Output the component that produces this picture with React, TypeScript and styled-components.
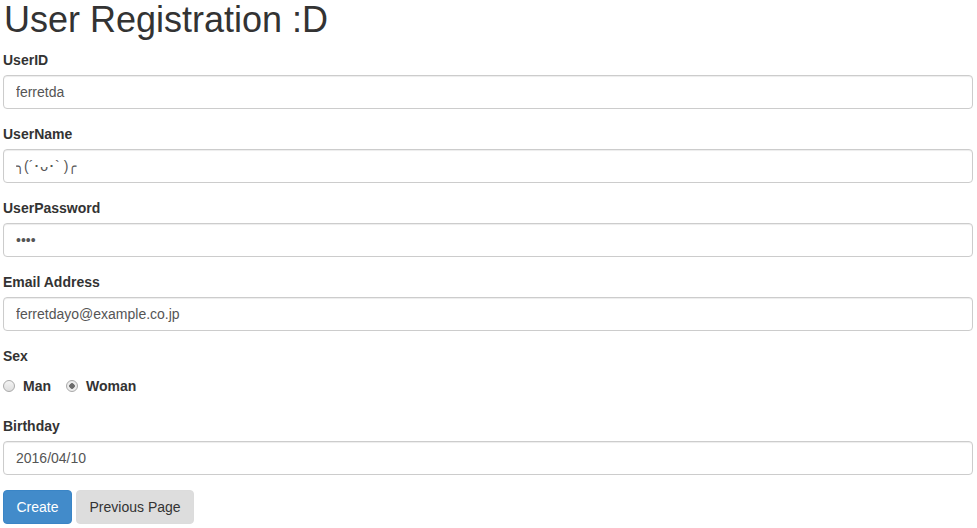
import React from "react";
import styled, { createGlobalStyle } from "styled-components";

const Global = createGlobalStyle`
  html, body { margin: 0; padding: 0; background: #fff; }
  body {
    font-family: "Liberation Sans", Arial, sans-serif;
    font-size: 14px;
    line-height: 1.42857143;
    color: #333;
  }
  * { box-sizing: border-box; }
`;

const Page = styled.div`
  padding: 0 4px 0 3px;
`;

const Title = styled.h1`
  margin: 0 0 10px 1px;
  font-size: 36px;
  font-weight: 500;
  line-height: 1.1;
  color: #333;
`;

const Group = styled.div`
  margin-bottom: 15px;
`;

const Label = styled.label`
  display: inline-block;
  margin-bottom: 5px;
  font-weight: bold;
  max-width: 100%;
`;

const Input = styled.input`
  display: block;
  width: 100%;
  height: 34px;
  padding: 6px 12px;
  font-family: "Liberation Sans", Arial, sans-serif;
  font-size: 14px;
  line-height: 1.42857143;
  color: #555;
  background: #fff;
  border: 1px solid #ccc;
  border-radius: 4px;
  box-shadow: inset 0 1px 1px rgba(0, 0, 0, 0.075);
  outline: none;
`;

const RadioRow = styled.div`
  display: flex;
  align-items: center;
  height: 30px;
  padding: 0;
`;

const RadioLabel = styled.label`
  display: inline-flex;
  align-items: center;
  font-weight: bold;
  line-height: 20px;
  margin-right: 15px;
`;

const RadioDot = styled.span<{ $checked?: boolean }>`
  display: inline-block;
  width: 12px;
  height: 12px;
  border-radius: 50%;
  border: 1px solid #a9a9a9;
  background: ${(p) =>
    p.$checked
      ? "radial-gradient(circle, #6b6b6b 0 2.5px, #ececec 3px)"
      : "linear-gradient(#f4f4f4, #dedede)"};
  margin-right: 8px;
`;

const Buttons = styled.div`
  display: flex;
  gap: 4px;
`;

const Button = styled.button<{ $primary?: boolean }>`
  height: 34px;
  padding: 6px 12.5px;
  font-family: "Liberation Sans", Arial, sans-serif;
  font-size: 14px;
  line-height: 1.42857143;
  border-radius: 4px;
  border: 1px solid ${(p) => (p.$primary ? "#3a85c6" : "#dcdcdc")};
  background: ${(p) => (p.$primary ? "#428bca" : "#dddddd")};
  color: ${(p) => (p.$primary ? "#fff" : "#333")};
  cursor: pointer;
`;

export default function App() {
  return (
    <Page>
      <Global />
      <Title>User Registration :D</Title>
      <Group>
        <Label>UserID</Label>
        <Input defaultValue="ferretda" />
      </Group>
      <Group>
        <Label>UserName</Label>
        <Input defaultValue="╮(´･ᴗ･` )╭" />
      </Group>
      <Group>
        <Label>UserPassword</Label>
        <Input type="password" defaultValue="abcd" />
      </Group>
      <Group>
        <Label>Email Address</Label>
        <Input defaultValue="ferretdayo@example.co.jp" />
      </Group>
      <Group>
        <Label>Sex</Label>
        <RadioRow>
          <RadioLabel>
            <RadioDot />
            Man
          </RadioLabel>
          <RadioLabel>
            <RadioDot $checked />
            Woman
          </RadioLabel>
        </RadioRow>
      </Group>
      <Group>
        <Label>Birthday</Label>
        <Input defaultValue="2016/04/10" />
      </Group>
      <Buttons>
        <Button $primary>Create</Button>
        <Button>Previous Page</Button>
      </Buttons>
    </Page>
  );
}
